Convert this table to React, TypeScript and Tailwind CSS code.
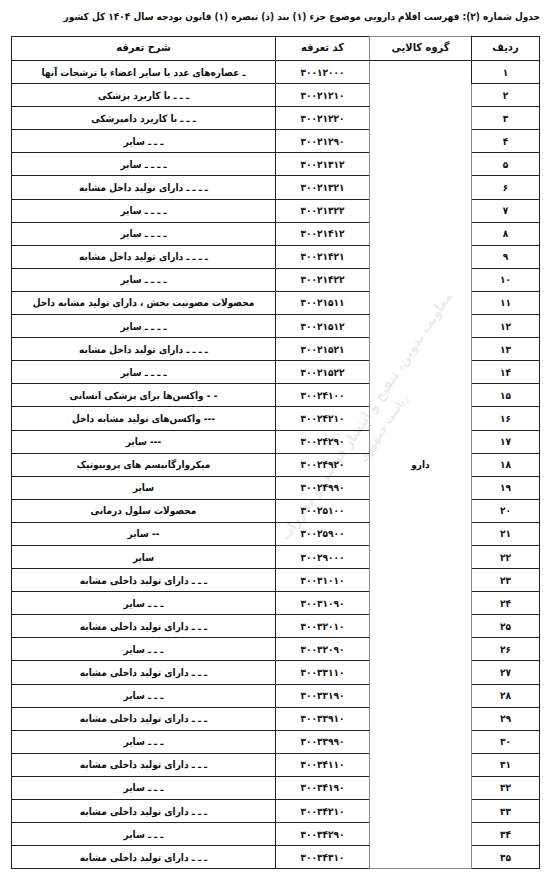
import React from 'react'

// [code, description] — row number is the index + 1
const ROWS: [string, string][] = [
  ['30012000', 'ـ عصاره‌های غدد یا سایر اعضاء یا ترشحات آنها'],
  ['30021210', 'ـ ـ ـ با کاربرد پزشکی'],
  ['30021220', 'ـ ـ ـ با کاربرد دامپزشکی'],
  ['30021290', 'ـ ـ ـ سایر'],
  ['30021312', 'ـ ـ ـ ـ سایر'],
  ['30021321', 'ـ ـ ـ ـ دارای تولید داخل مشابه'],
  ['30021322', 'ـ ـ ـ ـ سایر'],
  ['30021412', 'ـ ـ ـ ـ سایر'],
  ['30021421', 'ـ ـ ـ ـ دارای تولید داخل مشابه'],
  ['30021422', 'ـ ـ ـ ـ سایر'],
  ['30021511', 'محصولات مصونیت بخش ، دارای تولید مشابه داخل'],
  ['30021512', 'ـ ـ ـ ـ سایر'],
  ['30021521', 'ـ ـ ـ ـ دارای تولید داخل مشابه'],
  ['30021522', 'ـ ـ ـ ـ سایر'],
  ['30024100', '- - واکسن‌ها برای پزشکی انسانی'],
  ['30024210', '--- واکسن‌های تولید مشابه داخل'],
  ['30024290', '--- سایر'],
  ['30024920', 'میکروارگانیسم های پروبیوتیک'],
  ['30024990', 'سایر'],
  ['30025100', 'محصولات سلول درمانی'],
  ['30025900', '-- سایر'],
  ['30029000', 'سایر'],
  ['30031010', 'ـ ـ ـ دارای تولید داخلی مشابه'],
  ['30031090', 'ـ ـ ـ سایر'],
  ['30032010', 'ـ ـ ـ دارای تولید داخلی مشابه'],
  ['30032090', 'ـ ـ ـ سایر'],
  ['30033110', 'ـ ـ ـ دارای تولید داخلی مشابه'],
  ['30033190', 'ـ ـ ـ سایر'],
  ['30033910', 'ـ ـ ـ دارای تولید داخلی مشابه'],
  ['30033990', 'ـ ـ ـ سایر'],
  ['30034110', 'ـ ـ ـ دارای تولید داخلی مشابه'],
  ['30034190', 'ـ ـ ـ سایر'],
  ['30034210', 'ـ ـ ـ دارای تولید داخلی مشابه'],
  ['30034290', 'ـ ـ ـ سایر'],
  ['30034310', 'ـ ـ ـ دارای تولید داخلی مشابه'],
]

const toFa = (s: string) => s.replace(/\d/g, d => '۰۱۲۳۴۵۶۷۸۹'[+d])

export default function App() {
  return (
    <div
      dir="rtl"
      className="relative w-full h-[883px] bg-white text-[#111] overflow-hidden"
      style={{ fontFamily: '"DejaVu Sans Condensed", "DejaVu Sans", sans-serif' }}
    >
      <h1 className="pt-[9px] pr-[13px] text-[10px] font-bold leading-[16px] whitespace-nowrap">
        جدول شماره (۲): فهرست اقلام دارویی موضوع جزء (۱) بند (ذ) تبصره (۱) قانون بودجه سال ۱۴۰۴ کل کشور
      </h1>

      {/* faint watermark of the publisher, sits under the table text */}
      <div className="pointer-events-none absolute left-[215px] top-[400px] w-[320px] -rotate-[56deg] text-center text-[#ececec] font-bold leading-[22px] whitespace-nowrap">
        <div className="text-[14px]">معاونت تدوین، تنقیح و انتشار قوانین و مقررات</div>
        <div className="text-[11px]">ریاست جمهوری</div>
      </div>

      <table className="relative mt-[11px] mr-[13px] w-[529px] border-collapse border-[1.5px] border-black text-[10px] font-bold table-fixed">
        <colgroup>
          <col className="w-[68px]" />
          <col className="w-[102px]" />
          <col className="w-[94px]" />
          <col />
        </colgroup>
        <thead>
          <tr className="h-[24px] text-[11px]">
            <th className="border border-[#222] font-bold">ردیف</th>
            <th className="border border-[#888] border-b-[#222] font-bold">گروه کالایی</th>
            <th className="border border-[#222] font-bold">کد تعرفه</th>
            <th className="border border-[#222] font-bold">شرح تعرفه</th>
          </tr>
        </thead>
        <tbody>
          {ROWS.map(([code, desc], i) => (
            <tr key={code} className="h-[23.1px]">
              <td className="border border-[#222] text-center">{toFa(String(i + 1))}</td>
              {i === 0 && (
                <td rowSpan={ROWS.length} className="border border-[#888] text-center align-middle">
                  دارو
                </td>
              )}
              <td className="border border-[#222] text-center tracking-[0.5px]">{toFa(code)}</td>
              <td className="border border-[#222] text-center whitespace-nowrap">{desc}</td>
            </tr>
          ))}
        </tbody>
      </table>
    </div>
  )
}
